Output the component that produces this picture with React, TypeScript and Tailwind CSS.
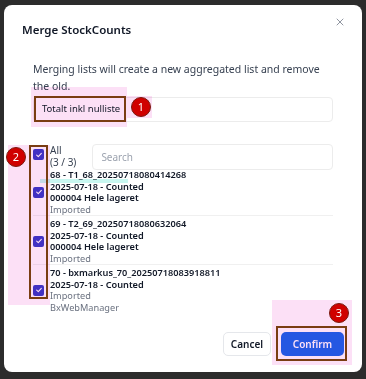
import { X } from "lucide-react";

const font = { fontFamily: '"Noto Sans", "Open Sans", sans-serif' };

function Check() {
  return (
    <span className="flex h-[11px] w-[11px] shrink-0 items-center justify-center rounded-[2px] bg-[#4338ca]">
      <svg viewBox="0 0 12 12" className="h-[8px] w-[8px]" fill="none" stroke="white" strokeWidth="1.6">
        <path d="M2.5 6.2l2.4 2.3 4.6-5" strokeLinecap="round" strokeLinejoin="round" />
      </svg>
    </span>
  );
}

function Badge({ n, className }: { n: string; className: string }) {
  return (
    <span
      className={`absolute flex h-[20px] w-[20px] items-center justify-center rounded-full border border-[#7a1a10] bg-[#d00000] text-[11px] text-white ${className}`}
    >
      {n}
    </span>
  );
}

const items = [
  { title: "68 - T1_68_20250718080414268", lines: ["2025-07-18 - Counted", "000004 Hele lageret"], grey: ["Imported"] },
  { title: "69 - T2_69_20250718080632064", lines: ["2025-07-18 - Counted", "000004 Hele lageret"], grey: ["Imported"] },
  { title: "70 - bxmarkus_70_20250718083918811", lines: ["2025-07-18 - Counted"], grey: ["Imported", "BxWebManager"] }
];

export default function App() {
  return (
    <div className="h-[379px] w-[366px] bg-[#2c2c2c] px-[4px] pt-[5px]" style={font}>
      <div className="relative h-[367px] rounded-[8px] bg-white text-[#1f2937]">
        <div className="flex items-start justify-between pl-[18px] pr-[16px] pt-[11px]">
          <h2 className="mt-[5px] text-[11.5px] font-semibold leading-[18px] text-[#111827]">Merge StockCounts</h2>
          <X className="h-[12px] w-[12px] text-[#6b7280]" strokeWidth={1.5} />
        </div>

        <div className="px-[29px]">
          <p className="mt-[22px] text-[10.5px] leading-[17px] text-[#374151]">
            Merging lists will create a new aggregated list and remove the old.
          </p>
          <div className="mt-[2px] flex h-[25px] items-center rounded-[4px] border border-[#ececec] px-[8px] text-[9.5px] text-[#111827]">
            Totalt inkl nulliste
          </div>

          <div className="mt-[22px] flex items-start gap-[6px]">
            <div className="mt-[5px]">
              <Check />
            </div>
            <div className="text-[10px] leading-[12px] text-[#374151]">
              All
              <br />
              (3 / 3)
            </div>
            <div className="ml-[10px] flex h-[26px] flex-1 items-center rounded-[4px] border border-[#ececec] px-[8px] text-[10px] text-[#9ca3af]">
              Search
            </div>
          </div>

          <div className="-mt-[1px] flex flex-col">
            {items.map((it, i) => (
              <div
                key={it.title}
                className={`flex items-center gap-[6px] ${i < 2 ? "border-b border-[#f0f0f0]" : ""} ${i > 0 ? "pt-[2px]" : ""}`}
              >
                <Check />
                <div className="text-[9.2px] font-semibold leading-[11.5px]">
                  <div className="text-[#111827]">{it.title}</div>
                  {it.lines.map((l) => (
                    <div key={l} className="text-[#111827]">
                      {l}
                    </div>
                  ))}
                  {it.grey.map((l) => (
                    <div key={l} className="font-normal text-[#6b7280]">
                      {l}
                    </div>
                  ))}
                </div>
              </div>
            ))}
          </div>

          <div className="-mr-[11px] mt-[19px] flex justify-end gap-[10px]">
            <button className="h-[24px] w-[48px] rounded-[5px] border border-[#e5e7eb] text-[10px] font-semibold text-[#111827]">
              Cancel
            </button>
            <button className="h-[24px] w-[63px] rounded-[5px] bg-[#2563eb] text-[10px] font-semibold text-white">
              Confirm
            </button>
          </div>
        </div>

        {/* annotation overlays */}
        <div className="pointer-events-none absolute left-[27px] top-[82px] h-[40px] w-[96px] bg-[#fbd3f3] opacity-70 mix-blend-multiply" />
        <div className="pointer-events-none absolute left-[123px] top-[91px] h-[22px] w-[25px] bg-[#fbd3f3] opacity-70 mix-blend-multiply" />
        <div className="pointer-events-none absolute left-[30px] top-[91px] h-[26px] w-[92px] border-2 border-[#7a3d12]" />
        <Badge n="1" className="left-[127px] top-[92px]" />

        <div className="pointer-events-none absolute left-[4px] top-[140px] h-[160px] w-[42px] bg-[#fbd3f3] opacity-70 mix-blend-multiply" />
        <div className="pointer-events-none absolute left-[36px] top-[174px] h-[4px] w-[88px] bg-[#b9f5ec] opacity-80 mix-blend-multiply" />
        <div className="pointer-events-none absolute left-[25px] top-[140px] h-[154px] w-[19px] border-2 border-[#7a3d12]" />
        <Badge n="2" className="left-[2px] top-[142px]" />

        <div className="pointer-events-none absolute left-[268px] top-[295px] h-[65px] w-[80px] bg-[#fbd3f3] opacity-70 mix-blend-multiply" />
        <div className="pointer-events-none absolute left-[272px] top-[321px] h-[35px] w-[71px] border-2 border-[#7a3d12]" />
        <Badge n="3" className="left-[325px] top-[298px]" />
      </div>
    </div>
  );
}
